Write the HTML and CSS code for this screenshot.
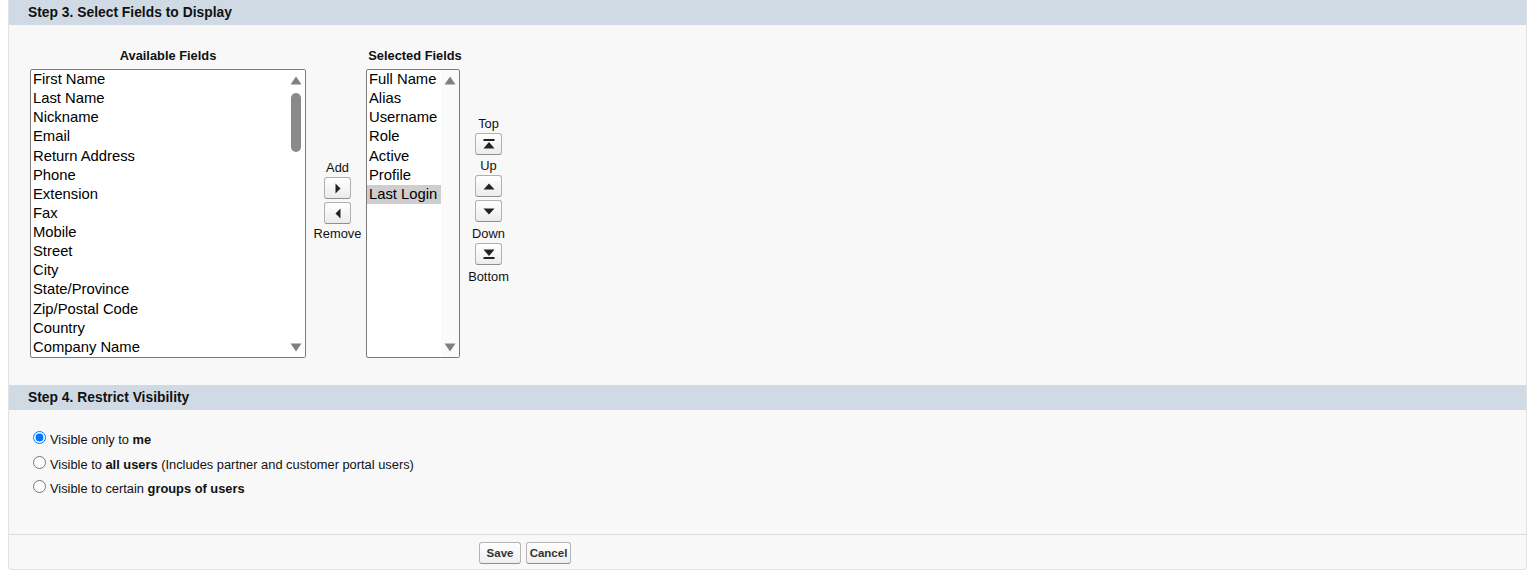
FILE: index.html
```html
<!DOCTYPE html>
<html>
<head>
<meta charset="utf-8">
<title>Select Fields</title>
<link rel="stylesheet" href="styles.css">
</head>
<body>
<div class="panel">
  <div class="subheader"><h3>Step 3. Select Fields to Display</h3></div>
  <div class="picker-section">
    <div class="picker">
      <div class="col col-avail">
        <div class="col-label">Available Fields</div>
        <div class="listbox listbox-avail">
          <div class="options">
            <div class="option">First Name</div>
            <div class="option">Last Name</div>
            <div class="option">Nickname</div>
            <div class="option">Email</div>
            <div class="option">Return Address</div>
            <div class="option">Phone</div>
            <div class="option">Extension</div>
            <div class="option">Fax</div>
            <div class="option">Mobile</div>
            <div class="option">Street</div>
            <div class="option">City</div>
            <div class="option">State/Province</div>
            <div class="option">Zip/Postal Code</div>
            <div class="option">Country</div>
            <div class="option">Company Name</div>
          </div>
          <div class="scrollbar">
            <div class="sb-btn"><svg width="12" height="9" viewBox="0 0 12 9"><polygon points="6,0.5 11.5,8.5 0.5,8.5" fill="#808080"/></svg></div>
            <div class="sb-thumb"></div>
            <div class="sb-btn sb-down"><svg width="12" height="9" viewBox="0 0 12 9"><polygon points="0.5,0.5 11.5,0.5 6,8.5" fill="#808080"/></svg></div>
          </div>
        </div>
      </div>

      <div class="col col-ctrl col-addremove">
        <div class="col-label"></div>
        <div class="ctrl-stack ctrl-addremove">
          <div class="ctrl-label">Add</div>
          <button class="icon-btn mt2" type="button"><svg width="6" height="11" viewBox="0 0 6 11"><polygon points="0.5,0.5 5.5,5.5 0.5,10.5" fill="#222"/></svg></button>
          <button class="icon-btn mt3" type="button"><svg width="6" height="11" viewBox="0 0 6 11"><polygon points="5.5,0.5 0.5,5.5 5.5,10.5" fill="#222"/></svg></button>
          <div class="ctrl-label mt1">Remove</div>
        </div>
      </div>

      <div class="col col-selected">
        <div class="col-label label-selected">Selected Fields</div>
        <div class="listbox listbox-selected">
          <div class="options">
            <div class="option">Full Name</div>
            <div class="option">Alias</div>
            <div class="option">Username</div>
            <div class="option">Role</div>
            <div class="option">Active</div>
            <div class="option">Profile</div>
            <div class="option selected">Last Login</div>
          </div>
          <div class="scrollbar">
            <div class="sb-btn"><svg width="12" height="9" viewBox="0 0 12 9"><polygon points="6,0.5 11.5,8.5 0.5,8.5" fill="#808080"/></svg></div>
            <div class="sb-btn sb-down"><svg width="12" height="9" viewBox="0 0 12 9"><polygon points="0.5,0.5 11.5,0.5 6,8.5" fill="#808080"/></svg></div>
          </div>
        </div>
      </div>

      <div class="col col-ctrl col-order">
        <div class="col-label"></div>
        <div class="ctrl-stack ctrl-order">
          <div class="ctrl-label">Top</div>
          <button class="icon-btn mt2" type="button"><svg width="12" height="10" viewBox="0 0 12 10"><rect x="0.5" y="0" width="11" height="2" fill="#222"/><polygon points="6,3 11.5,9.5 0.5,9.5" fill="#222"/></svg></button>
          <div class="ctrl-label mt2">Up</div>
          <button class="icon-btn mt2" type="button"><svg width="12" height="7" viewBox="0 0 12 7"><polygon points="6,0.5 11.5,6.5 0.5,6.5" fill="#222"/></svg></button>
          <button class="icon-btn mt3" type="button"><svg width="12" height="7" viewBox="0 0 12 7"><polygon points="0.5,0.5 11.5,0.5 6,6.5" fill="#222"/></svg></button>
          <div class="ctrl-label mt3">Down</div>
          <button class="icon-btn mt2" type="button"><svg width="12" height="10" viewBox="0 0 12 10"><polygon points="0.5,0.5 11.5,0.5 6,7" fill="#222"/><rect x="0.5" y="8" width="11" height="2" fill="#222"/></svg></button>
          <div class="ctrl-label mt3">Bottom</div>
        </div>
      </div>
    </div>
  </div>

  <div class="subheader"><h3>Step 4. Restrict Visibility</h3></div>
  <div class="visibility-section">
    <label class="radio-row"><input type="radio" name="vis" checked><span>Visible only to <b>me</b></span></label>
    <label class="radio-row"><input type="radio" name="vis"><span>Visible to <b>all users</b> (Includes partner and customer portal users)</span></label>
    <label class="radio-row"><input type="radio" name="vis"><span>Visible to certain <b>groups of users</b></span></label>
  </div>

  <div class="footer">
    <button class="btn btn-save" type="button">Save</button>
    <button class="btn btn-cancel" type="button">Cancel</button>
  </div>
</div>
</body>
</html>
```

FILE: styles.css
```css
html, body {
  margin: 0;
  padding: 0;
  background: #ffffff;
}

body {
  font-family: "Liberation Sans", Arial, sans-serif;
  color: #000;
}

.panel {
  margin-left: 8px;
  width: 1519px;
  box-sizing: border-box;
  background: #f8f8f8;
  border: 1px solid #e0e2e4;
  border-top: none;
  border-radius: 0 0 4px 4px;
}

.subheader {
  height: 25px;
  background: #cfdae4;
  padding-left: 19px;
}

.subheader h3 {
  margin: 0;
  font-size: 13.85px;
  font-weight: bold;
  line-height: 25px;
  color: #111;
}

/* Step 3 */
.picker-section {
  padding: 22px 0 27px 21px;
}

.picker {
  display: flex;
  align-items: flex-start;
}

.col-label {
  height: 15px;
  padding-top: 1px;
  line-height: 16px;
  margin-bottom: 6px;
  font-size: 12.85px;
  font-weight: bold;
  text-align: center;
  color: #111;
  white-space: nowrap;
}

.col-selected {
  width: 94px;
}

.label-selected {
  margin-left: -3px;
  margin-right: -7px;
}

.listbox {
  display: flex;
  height: 289px;
  box-sizing: border-box;
  border: 1px solid #7a7a7a;
  border-radius: 2px;
  background: #fff;
  overflow: hidden;
}

.listbox-avail { width: 276px; }
.listbox-selected { width: 94px; }

.options {
  flex: 1;
  min-width: 0;
}

.option {
  height: 19.14px;
  line-height: 19.14px;
  padding-left: 2px;
  font-size: 14.8px;
  white-space: nowrap;
  overflow: hidden;
  color: #000;
}

.option.selected {
  background: #cecece;
}

.scrollbar {
  width: 18px;
  display: flex;
  flex-direction: column;
  align-items: center;
  background: #fafafa;
}

.listbox-avail .scrollbar { background: #fff; }

.sb-btn {
  height: 20px;
  width: 18px;
  display: flex;
  align-items: center;
  justify-content: center;
}

.sb-down {
  margin-top: auto;
}

.sb-thumb {
  margin-top: 3px;
  width: 10px;
  height: 59px;
  border-radius: 5px;
  background: #8a8a8a;
}

/* control columns */
.col-ctrl {
  width: 57px;
}

.col-addremove {
  margin-left: 3px;
}

.ctrl-addremove { padding-top: 90px; }
.ctrl-order { padding-top: 46px; }

.ctrl-stack {
  display: flex;
  flex-direction: column;
  align-items: center;
}

.ctrl-label {
  height: 15px;
  padding-top: 1px;
  line-height: 16px;
  font-size: 12.85px;
  color: #111;
  white-space: nowrap;
}

.icon-btn {
  width: 27px;
  height: 22px;
  box-sizing: border-box;
  padding: 0;
  margin: 0;
  display: flex;
  align-items: center;
  justify-content: center;
  border: 1px solid #b0b0b0;
  border-bottom-color: #8e8e8e;
  border-radius: 3px;
  background: linear-gradient(#ffffff, #ececec);
}

.mt1 { margin-top: 1px; }
.mt2 { margin-top: 2px; }
.mt3 { margin-top: 3px; }

/* Step 4 */
.visibility-section {
  height: 124px;
  box-sizing: border-box;
  padding: 17.5px 0 0 24px;
}

.radio-row {
  display: flex;
  align-items: center;
  height: 24.5px;
  font-size: 12.85px;
  color: #111;
}

.radio-row input {
  width: 13px;
  height: 13px;
  margin: 0 4px 4px 0;
  accent-color: #0075ff;
}

/* footer */
.footer {
  border-top: 1px solid #dcdcdc;
  padding: 7px 0 5px 470px;
  display: flex;
}

.btn {
  height: 22px;
  box-sizing: border-box;
  padding: 0;
  font-family: "Liberation Sans", Arial, sans-serif;
  font-size: 11.5px;
  font-weight: bold;
  color: #333;
  border: 1px solid #b5b5b5;
  border-bottom-color: #8e8e8e;
  border-radius: 3px;
  background: linear-gradient(#ffffff, #efefef);
}

.btn-save { width: 42px; }
.btn-cancel { width: 45px; margin-left: 5px; }
```
